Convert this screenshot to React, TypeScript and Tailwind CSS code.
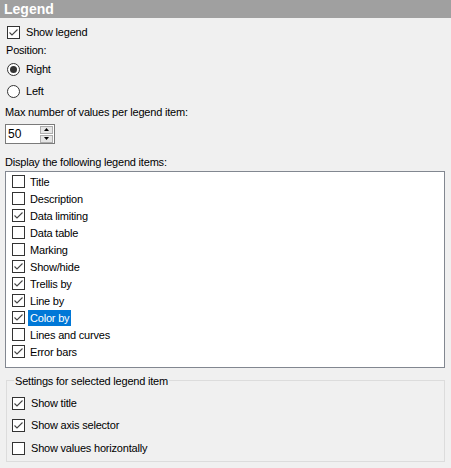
import React from 'react';

function CheckBox({ checked }: { checked: boolean }) {
  return (
    <div className="w-[13px] h-[13px] shrink-0 bg-white border border-[#333333] flex items-center justify-center">
      {checked && (
        <svg width="11" height="11" viewBox="0 0 11 11">
          <polyline points="1.5,5.5 4,8 9.5,2.5" fill="none" stroke="#444444" strokeWidth="1.1" />
        </svg>
      )}
    </div>
  );
}

function Radio({ checked }: { checked: boolean }) {
  return (
    <div className="w-[13px] h-[13px] shrink-0 rounded-full bg-white border border-[#333333] flex items-center justify-center">
      {checked && <div className="w-[7px] h-[7px] rounded-full bg-[#333333]" />}
    </div>
  );
}

const legendItems = [
  { label: 'Title', checked: false },
  { label: 'Description', checked: false },
  { label: 'Data limiting', checked: true },
  { label: 'Data table', checked: false },
  { label: 'Marking', checked: false },
  { label: 'Show/hide', checked: true },
  { label: 'Trellis by', checked: true },
  { label: 'Line by', checked: true },
  { label: 'Color by', checked: true, selected: true },
  { label: 'Lines and curves', checked: false },
  { label: 'Error bars', checked: true },
];

export default function App() {
  return (
    <div
      className="w-[451px] h-[468px] bg-[#f0f0f0] text-black text-[11px] tracking-[-0.2px] flex flex-col"
      style={{ fontFamily: '"Liberation Sans", Arial, sans-serif' }}
    >
      {/* header bar */}
      <div className="h-[18px] shrink-0 bg-[#a0a0a0] pl-[4px] text-white font-bold text-[14px] leading-[18px] tracking-normal">
        Legend
      </div>

      <div className="flex flex-col pl-[6px]">
        <div className="mt-[6px] h-[16px] flex items-center gap-[6px] pl-[1px]">
          <CheckBox checked />
          <span>Show legend</span>
        </div>
        <div className="mt-[2px] h-[16px] flex items-center">Position:</div>
        <div className="mt-[3px] h-[16px] flex items-center gap-[6px] pl-[1px]">
          <Radio checked />
          <span>Right</span>
        </div>
        <div className="mt-[6px] h-[16px] flex items-center gap-[6px] pl-[1px]">
          <Radio checked={false} />
          <span>Left</span>
        </div>
        <div className="mt-[5px] h-[16px] flex items-center -ml-[1px]">Max number of values per legend item:</div>

        {/* spin box */}
        <div className="mt-[4px] h-[20px] w-[50px] -ml-[1px] bg-white border border-[#7a7a7a] flex items-center">
          <span className="pl-[2px] flex-1 text-[12px] tracking-normal">50</span>
          <div className="flex flex-col gap-[1px] mr-[1px]">
            <div className="w-[13px] h-[8px] bg-[#e5e5e5] border border-[#adadad] flex items-center justify-center">
              <svg width="5" height="3" viewBox="0 0 5 3"><polygon points="2.5,0 5,3 0,3" fill="#000" /></svg>
            </div>
            <div className="w-[13px] h-[8px] bg-[#e5e5e5] border border-[#adadad] flex items-center justify-center">
              <svg width="5" height="3" viewBox="0 0 5 3"><polygon points="0,0 5,0 2.5,3" fill="#000" /></svg>
            </div>
          </div>
        </div>

        <div className="mt-[10px] h-[16px] flex items-center -ml-[1px]">Display the following legend items:</div>

        {/* list of legend items */}
        <div className="mt-[1px] -ml-[1px] w-[440px] h-[197px] bg-white border border-[#828790] pt-[1px] pl-[6px]">
          {legendItems.map((item) => (
            <div key={item.label} className="h-[17px] flex items-center gap-[3px]">
              <CheckBox checked={item.checked} />
              <span
                className={
                  item.selected
                    ? 'bg-[#0078d7] text-white px-[2px] h-[16px] leading-[16px]'
                    : 'px-[2px] h-[16px] leading-[16px]'
                }
              >
                {item.label}
              </span>
            </div>
          ))}
        </div>

        {/* group box */}
        <div className="relative mt-[12px] w-[439px] h-[82px] border border-[#dcdcdc] flex flex-col pl-[5px] pt-[14px]">
          <span className="absolute -top-[8px] left-[7px] px-[1px] bg-[#f0f0f0] h-[16px] leading-[16px]">
            Settings for selected legend item
          </span>
          <div className="h-[16px] flex items-center gap-[6px]">
            <CheckBox checked />
            <span>Show title</span>
          </div>
          <div className="mt-[6px] h-[16px] flex items-center gap-[6px]">
            <CheckBox checked />
            <span>Show axis selector</span>
          </div>
          <div className="mt-[7px] h-[16px] flex items-center gap-[6px]">
            <CheckBox checked={false} />
            <span>Show values horizontally</span>
          </div>
        </div>
      </div>
    </div>
  );
}
